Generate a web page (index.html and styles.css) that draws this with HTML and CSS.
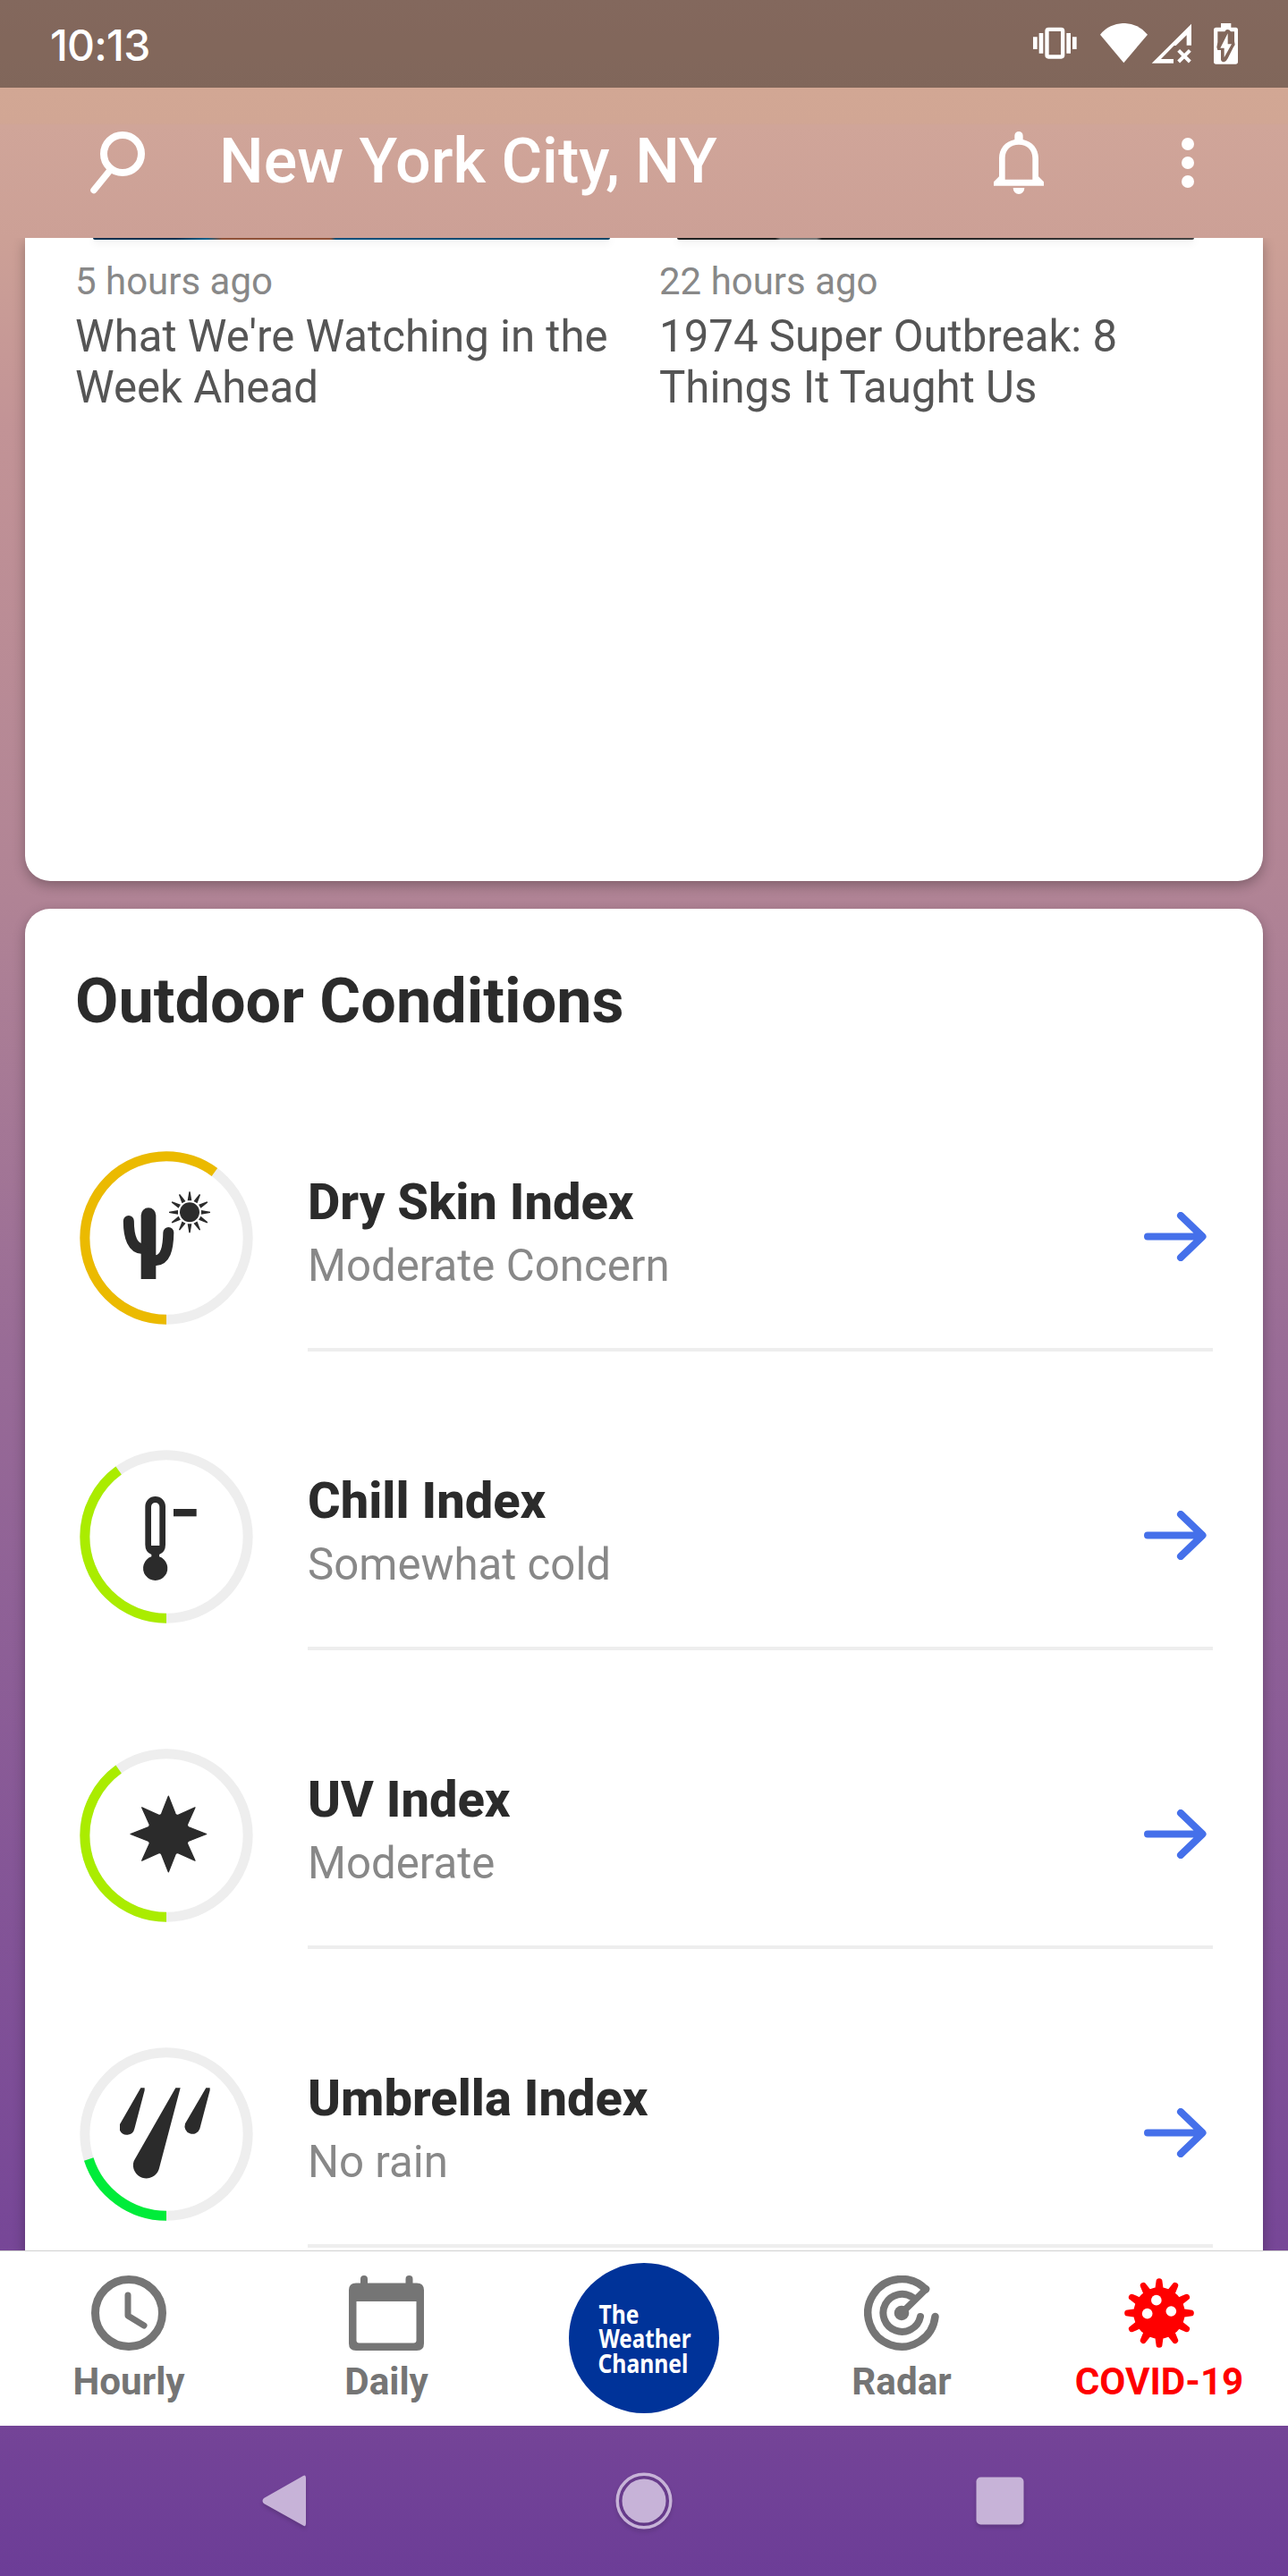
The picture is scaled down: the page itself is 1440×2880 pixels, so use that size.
FILE: index.html
```html
<!DOCTYPE html>
<html lang="en">
<head>
<meta charset="utf-8">
<title>New York City, NY - Weather</title>
<link rel="stylesheet" href="styles.css">
</head>
<body>
<div class="phone">
  <div class="status-bar">
    <span class="clock">10:13</span>
    <svg class="status-icons" viewBox="165 78 687 138" fill="#fff">
      <rect x="211.500" y="98.500" width="53" height="92" rx="5" fill="none" stroke="#fff" stroke-width="13"/>
      <path d="M185 111h14v68h-14zM165 124h14v41h-14zM277 111h14v68h-14zM297 124h14v41h-14z"/>
      <path d="M469 211 390 116A102 102 0 0 1 549 116Z"/>
      <path d="M563 212 696 80V152H680V118L644 153H638L594 198H636V212Z"/>
      <path d="M653 169 691 207M691 169 653 207" stroke="#fff" stroke-width="12"/>
      <path fill-rule="evenodd" d="M795 78H829V92H845Q852 92 852 100V207Q852 215 844 215H779Q771 215 771 207V100Q771 92 779 92H795ZM784 106V142L781 158L784 168H795V200Q797 208 806 208Q814 205 818 196L836 160L842 150L840 138V106H828Q824 99 817 99Q811 99 808 106Z"/>
      <path d="M818 112 793 161H806V193L831 148H818Z"/>
    </svg>
  </div>

  <header class="app-bar">
    <svg class="search" viewBox="0 0 62 72" fill="none" stroke="#fff" stroke-linecap="round">
      <circle cx="36" cy="26" r="21" stroke-width="8"/>
      <path d="M21.500 45 4 66.500" stroke-width="7.500"/>
    </svg>
    <h1 class="city">New York City, NY</h1>
    <svg class="bell" viewBox="33 441 168 210" fill="#fff">
      <path fill-rule="evenodd" d="M103 468V455A14 14 0 0 1 131 455V468C163 475 183 499 183 530V592L201 610V623H33V610L51 592V530C51 499 71 475 103 468ZM71 602H163V530C163 502 144 485 117 485S71 502 71 530Z"/>
      <path d="M98 630H136A19 21 0 0 1 98 630Z"/>
    </svg>
    <svg class="more" viewBox="0 0 14 56" fill="#fff">
      <circle cx="7" cy="7" r="7"/><circle cx="7" cy="28" r="7"/><circle cx="7" cy="49" r="7"/>
    </svg>
  </header>

  <main class="feed">
    <section class="card news">
      <article class="story">
        <div class="thumb thumb-blue"></div>
        <p class="age">5 hours ago</p>
        <h3 class="headline">What We're Watching in the Week Ahead</h3>
      </article>
      <article class="story">
        <div class="thumb thumb-dark"></div>
        <p class="age">22 hours ago</p>
        <h3 class="headline">1974 Super Outbreak: 8 Things It Taught Us</h3>
      </article>
    </section>

    <section class="card outdoor">
      <h2 class="section-title">Outdoor Conditions</h2>

      <div class="row">
        <svg class="gauge" viewBox="57 80 582 582">
          <circle class="track" cx="348" cy="371" r="273.500"/>
          <circle class="level moderate" cx="348" cy="371" r="273.500" pathLength="100" stroke-dasharray="60 100" transform="rotate(90 348 371)"/>
          <path class="ink" d="M263 509V295A25 25 0 0 1 313 295V509Z"/>
          <path class="arm" d="M221.500 314C221.500 370 236 407 268 407M355 353C354 410 344 447 310 447"/>
          <g class="ink" transform="translate(426 285)">
            <circle r="33"/>
            <path id="ray" d="M-7 -39 -2 -69H2L7 -39Z"/>
            <use href="#ray" transform="rotate(30)"/><use href="#ray" transform="rotate(60)"/>
            <use href="#ray" transform="rotate(90)"/><use href="#ray" transform="rotate(120)"/>
            <use href="#ray" transform="rotate(150)"/><use href="#ray" transform="rotate(180)"/>
            <use href="#ray" transform="rotate(210)"/><use href="#ray" transform="rotate(240)"/>
            <use href="#ray" transform="rotate(270)"/><use href="#ray" transform="rotate(300)"/>
            <use href="#ray" transform="rotate(330)"/>
          </g>
        </svg>
        <div class="row-body">
          <div class="row-text"><h3 class="name">Dry Skin Index</h3><p class="value">Moderate Concern</p></div>
          <svg class="arrow" viewBox="0 0 70 55"><path d="M4 27.500H65M41 4 65.500 27.500 41 51"/></svg>
        </div>
      </div>

      <div class="row">
        <svg class="gauge" viewBox="57 63 582 582">
          <circle class="track" cx="348" cy="354" r="273.500"/>
          <circle class="level low" cx="348" cy="354" r="273.500" pathLength="100" stroke-dasharray="40 100" transform="rotate(90 348 354)"/>
          <path class="ink" fill-rule="evenodd" d="M277 253A34 34 0 0 1 345 253V381Q345 406 324 414V421A41 41 0 1 1 298 421V414Q277 406 277 381ZM297 384H325V254A14 14 0 0 0 297 254Z"/>
          <path class="ink" d="M372 261h77v25h-77z"/>
        </svg>
        <div class="row-body">
          <div class="row-text"><h3 class="name">Chill Index</h3><p class="value">Somewhat cold</p></div>
          <svg class="arrow" viewBox="0 0 70 55"><path d="M4 27.500H65M41 4 65.500 27.500 41 51"/></svg>
        </div>
      </div>

      <div class="row">
        <svg class="gauge" viewBox="57 75 582 582">
          <circle class="track" cx="348" cy="366" r="273.500"/>
          <circle class="level low" cx="348" cy="366" r="273.500" pathLength="100" stroke-dasharray="40 100" transform="rotate(90 348 366)"/>
          <path class="ink star" transform="translate(355 361.500)" d="M0 -127 23 -68Q27 -61 34 -64L89 -89 64 -34Q61 -27 68 -23L127 0 68 23Q61 27 64 34L89 89 34 64Q27 61 23 68L0 127 -23 68Q-27 61 -34 64L-89 89 -64 34Q-61 27 -68 23L-127 0 -68 -23Q-61 -27 -64 -34L-89 -89 -34 -64Q-27 -61 -23 -68Z"/>
        </svg>
        <div class="row-body">
          <div class="row-text"><h3 class="name">UV Index</h3><p class="value">Moderate</p></div>
          <svg class="arrow" viewBox="0 0 70 55"><path d="M4 27.500H65M41 4 65.500 27.500 41 51"/></svg>
        </div>
      </div>

      <div class="row">
        <svg class="gauge" viewBox="57 56 582 582">
          <circle class="track" cx="348" cy="347" r="273.500"/>
          <circle class="level none" cx="348" cy="347" r="273.500" pathLength="100" stroke-dasharray="20 100" transform="rotate(90 348 347)"/>
          <path class="ink" d="M262 192H275V200L241 329A26 26 0 0 1 192 334V314Z"/>
          <path class="ink" d="M379 192H395L323 465A44 44 0 1 1 239 437Z"/>
          <path class="ink" d="M481 192H494V200L460 329A25.500 25.500 0 1 1 411 312Z"/>
        </svg>
        <div class="row-body">
          <div class="row-text"><h3 class="name">Umbrella Index</h3><p class="value">No rain</p></div>
          <svg class="arrow" viewBox="0 0 70 55"><path d="M4 27.500H65M41 4 65.500 27.500 41 51"/></svg>
        </div>
      </div>
    </section>
  </main>

  <nav class="tabs">
    <a class="tab">
      <svg class="tab-icon" viewBox="0 0 84 84" fill="none" stroke="#757575">
        <circle cx="42" cy="42" r="37.500" stroke-width="9"/>
        <path d="M41 22V45L59 56" stroke-width="7" stroke-linecap="round" stroke-linejoin="round"/>
      </svg>
      Hourly
    </a>
    <a class="tab">
      <svg class="tab-icon" viewBox="0 0 84 84" fill="#757575">
        <path fill-rule="evenodd" d="M13 8.500V4A4 4 0 0 1 21 4V8.500H63.500V4A4 4 0 0 1 71.500 4V8.500H76Q84 8.500 84 16.500V76Q84 84 76 84H8Q0 84 0 76V16.500Q0 8.500 8 8.500ZM8.500 29V72.500Q8.500 75.500 11.500 75.500H72.500Q75.500 75.500 75.500 72.500V29Z"/>
      </svg>
      Daily
    </a>
    <a class="tab home">
      <svg class="logo" viewBox="0 0 168 168">
        <circle cx="84" cy="84" r="84" fill="#003399"/>
        <g class="logo-text">
          <text x="33.500" y="67.700" textLength="45" lengthAdjust="spacingAndGlyphs">The</text>
          <text x="33.500" y="95" textLength="103" lengthAdjust="spacingAndGlyphs">Weather</text>
          <text x="32.500" y="122.500" textLength="101" lengthAdjust="spacingAndGlyphs">Channel</text>
        </g>
      </svg>
    </a>
    <a class="tab">
      <svg class="tab-icon" viewBox="0 0 84 84" fill="none" stroke="#757575" stroke-linecap="round" stroke-linejoin="round">
        <path stroke-width="8.500" d="M79.500 46A37.700 37.700 0 1 1 69 15.500"/>
        <path stroke-width="8" d="M63 46A21 21 0 1 1 55 25"/>
        <path stroke-width="7.500" d="M42 42 69.500 15"/>
        <circle cx="42" cy="42" r="8.300" fill="#757575" stroke="none"/>
      </svg>
      Radar
    </a>
    <a class="tab alert">
      <svg class="tab-icon" viewBox="342 132 252 252" fill="#f00">
        <g transform="translate(468 258)">
          <circle r="86"/>
          <path id="spike" d="M-14 -80 -10.500 -106A10.500 10.500 0 0 1 10.500 -106L14 -80Z"/>
          <use href="#spike" transform="rotate(30)"/><use href="#spike" transform="rotate(60)"/>
          <use href="#spike" transform="rotate(90)"/><use href="#spike" transform="rotate(120)"/>
          <use href="#spike" transform="rotate(150)"/><use href="#spike" transform="rotate(180)"/>
          <use href="#spike" transform="rotate(210)"/><use href="#spike" transform="rotate(240)"/>
          <use href="#spike" transform="rotate(270)"/><use href="#spike" transform="rotate(300)"/>
          <use href="#spike" transform="rotate(330)"/>
        </g>
        <g fill="#fff"><circle cx="458.500" cy="215" r="17.500"/><circle cx="428" cy="260" r="17.500"/><circle cx="508" cy="252" r="17.500"/></g>
      </svg>
      COVID-19
    </a>
  </nav>

  <div class="system-nav">
    <svg class="sys-icon" viewBox="0 0 80 80"><path d="M52 12Q55 10 55 15V65Q55 70 51 67L8 43Q5 40 8 37Z" transform="translate(5)"/></svg>
    <svg class="sys-icon" viewBox="0 0 80 80"><circle cx="40" cy="40" r="24.500"/><circle cx="40" cy="40" r="29.800" class="ring"/></svg>
    <svg class="sys-icon" viewBox="0 0 80 80"><rect x="13.500" y="13.500" width="53" height="53" rx="5"/></svg>
  </div>
</div>
</body>
</html>
```
FILE: styles.css
```css
* {
  box-sizing: border-box;
  margin: 0;
  padding: 0;
}

body {
  font-family: Roboto, "Liberation Sans", sans-serif;
}

svg {
  display: block;
  flex: none;
}

.phone {
  display: flex;
  flex-direction: column;
  width: 1440px;
  height: 2880px;
  overflow: hidden;
  background: linear-gradient(#d7aa98 0, #d2a794 98px, #d1a694 138px, #d0a599 140px, #cca096 266px, #c29396 480px, #b18495 985px, #986b96 1520px, #774797 2500px, #744497 2712px, #6c3d97 2880px);
}

.status-bar {
  display: flex;
  align-items: flex-start;
  justify-content: space-between;
  flex: none;
  height: 98px;
  padding: 26px 56px 0 56px;
  background: rgba(0, 0, 0, 0.39);
}

.clock {
  font: 500 48px/50px Inter, sans-serif;
  letter-spacing: -0.8px;
  color: #fff;
}

.status-icons {
  width: 229px;
  height: 46px;
}

.app-bar {
  display: flex;
  align-items: center;
  flex: none;
  height: 168px;
  padding: 0 105px 0 101px;
}

.search {
  width: 62px;
  height: 72px;
}

.city {
  flex: 1;
  margin-left: 82px;
  padding-bottom: 4px;
  font-size: 70px;
  font-weight: 500;
  line-height: 84px;
  color: #fff;
}

.bell {
  width: 56px;
  height: 70px;
}

.more {
  width: 14px;
  height: 56px;
  margin-left: 154px;
}

.feed {
  flex: 1;
  display: flex;
  flex-direction: column;
  gap: 31px;
  padding: 0 28px;
  overflow: hidden;
}

.card {
  flex: none;
  border-radius: 28px;
  background: #fff;
  box-shadow: 0 5px 14px rgba(0, 0, 0, 0.28);
}

.news {
  display: flex;
  gap: 33px;
  height: 719px;
  padding: 0 35px 0 56px;
  border-radius: 0 0 28px 28px;
}

/* The card continues past the bottom of the scrolled view. */
.outdoor {
  padding-bottom: 60px;
}

.story {
  width: 620px;
}

.thumb {
  width: 578px;
  height: 2px;
  margin-left: 20px;
  border-radius: 0 0 3px 3px;
  box-shadow: 0 2px 10px rgba(0, 0, 0, 0.2);
}

.thumb-blue {
  background: linear-gradient(90deg, #06304f 16%, #0d618c 22%, #8f5238 25% 46%, #07507c 47%, #0d4668);
}

.thumb-dark {
  background: linear-gradient(90deg, #222 19%, #777 20% 27%, #222 28% 50%, #444);
}

.age {
  margin-top: 22px;
  font-size: 42px;
  line-height: 50px;
  color: #888;
}

.headline {
  margin-top: 8px;
  font-size: 49.2px;
  font-weight: 400;
  line-height: 57px;
  color: #555;
}

.section-title {
  padding: 61px 56px 16px;
  font-size: 70.2px;
  font-weight: 700;
  line-height: 84px;
  color: #2b2b2b;
}

.row {
  display: flex;
  gap: 61px;
  height: 334px;
  padding: 0 56px 0 61px;
}

.gauge {
  width: 194px;
  height: 194px;
  margin-top: 110px;
}

.track,
.level {
  fill: none;
  stroke-width: 33;
  stroke: #eee;
}

.moderate {
  stroke: #ebba00;
}

.low {
  stroke: #aaec00;
}

.none {
  stroke: #00ec3a;
}

.ink {
  fill: #2b2b2b;
}

.arm {
  fill: none;
  stroke: #2b2b2b;
  stroke-width: 36;
  stroke-linecap: round;
}

.star {
  stroke: #2b2b2b;
  stroke-width: 4;
  stroke-linejoin: round;
}

.row-body {
  display: flex;
  flex: 1;
  justify-content: space-between;
  padding-right: 7px;
  border-bottom: 4px solid #eee;
}

.row-text {
  padding-top: 130px;
}

.name {
  font-size: 56px;
  font-weight: 800;
  line-height: 75px;
  color: #2b2b2b;
}

.value {
  font-size: 49.2px;
  line-height: 66px;
  color: #888;
}

.arrow {
  width: 70px;
  height: 55px;
  margin-top: 178px;
  fill: none;
  stroke: #4570ea;
  stroke-width: 8;
  stroke-linecap: round;
  stroke-linejoin: round;
}

.tabs {
  display: grid;
  grid-template-columns: repeat(5, 1fr);
  flex: none;
  height: 196px;
  border-top: 1px solid #d0d0d0;
  background: #fff;
}

.tab {
  display: flex;
  flex-direction: column;
  align-items: center;
  padding-top: 27px;
  font-size: 42.2px;
  font-weight: 700;
  line-height: 50px;
  color: #757575;
}

.tab-icon {
  width: 84px;
  height: 84px;
  margin-bottom: 10px;
}

.home {
  padding-top: 13px;
}

.alert {
  color: #f00;
}

.logo {
  width: 168px;
  height: 168px;
}

.logo-text {
  font: 700 28px "Noto Sans", sans-serif;
  fill: #fff;
}

.system-nav {
  display: flex;
  align-items: center;
  justify-content: center;
  flex: none;
  gap: 318px;
  height: 168px;
}

.sys-icon {
  width: 80px;
  height: 80px;
  fill: #c7b3d8;
  filter: drop-shadow(0 3px 2px rgba(0, 0, 0, 0.15));
}

.ring {
  fill: none;
  stroke: #c7b3d8;
  stroke-width: 3.5;
}
```
